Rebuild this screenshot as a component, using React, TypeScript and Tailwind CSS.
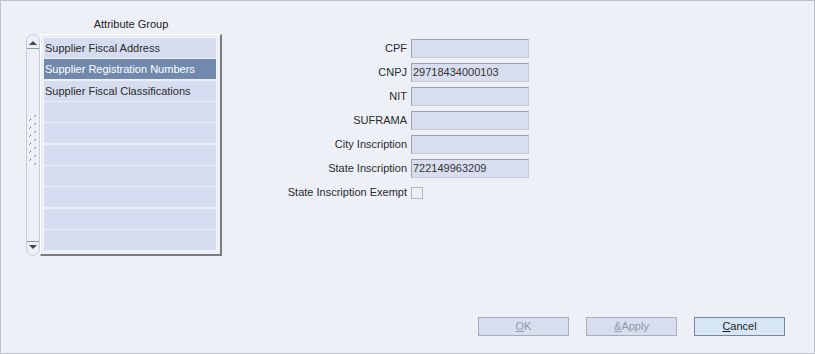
import React from 'react';

const groups = [
    'Supplier Fiscal Address',
    'Supplier Registration Numbers',
    'Supplier Fiscal Classifications',
    '', '', '', '', '', '', '',
];

const fields: { label: string; value: string }[] = [
    { label: 'CPF', value: '' },
    { label: 'CNPJ', value: '29718434000103' },
    { label: 'NIT', value: '' },
    { label: 'SUFRAMA', value: '' },
    { label: 'City Inscription', value: '' },
    { label: 'State Inscription', value: '722149963209' },
];

function ScrollBar() {
    const left = [0, 1, 2, 3, 4, 5].map(i => 6 + i * 8);
    const right = [0, 1, 2, 3, 4, 5, 6].map(i => 2 + i * 8);
    return (
        <div className="w-[14px] h-[222px] rounded-full border border-[#c3cce0] bg-[#eef0f8] flex flex-col items-center overflow-hidden">
            <div className="h-[14px] w-full flex items-center justify-center border-b border-[#8b99b0]">
                <svg width="8" height="5" viewBox="0 0 8 5" className="mt-[1px]">
                    <path d="M0 5 L4 1 L8 5 Z" fill="#3f4757" />
                </svg>
            </div>
            <div className="flex-1 w-full flex items-center justify-center mb-[10px]">
                <svg width="10" height="54" viewBox="0 0 10 54">
                    {left.map(y => (
                        <g key={'l' + y}>
                            <rect x="1" y={y + 1} width="1" height="1" fill="#8c9bb8" />
                            <rect x="2" y={y} width="1" height="1" fill="#4f5f80" />
                        </g>
                    ))}
                    {right.map(y => (
                        <g key={'r' + y}>
                            <rect x="6" y={y + 1} width="1" height="1" fill="#8c9bb8" />
                            <rect x="7" y={y} width="1" height="1" fill="#4f5f80" />
                        </g>
                    ))}
                </svg>
            </div>
            <div className="h-[14px] w-full flex items-center justify-center border-t border-[#8b99b0]">
                <svg width="8" height="5" viewBox="0 0 8 5" className="mb-[2px]">
                    <path d="M0 0 L8 0 L4 4 Z" fill="#3f4757" />
                </svg>
            </div>
        </div>
    );
}

function Button({ children, disabled }: { children: React.ReactNode; disabled?: boolean }) {
    return (
        <button
            className={
                disabled
                    ? 'w-[91px] h-[19px] border border-[#a9aeb9] bg-[#d8def0] text-[#9199ab] leading-[17px]'
                    : 'w-[91px] h-[19px] border border-[#76869e] bg-[#d6e6f7] text-[#1e1e1e] leading-[17px]'
            }
        >
            {children}
        </button>
    );
}

export default function App() {
    return (
        <div
            className="w-[815px] h-[354px] border border-[#bfc1c8] bg-[#eef0f8] flex flex-col text-[11px] text-[#2a2a2a]"
            style={{ fontFamily: '"Liberation Sans", Arial, sans-serif' }}
        >
            <div className="flex-1 flex pt-[14px] pl-[25px]">
                <div className="flex flex-col">
                    <div className="h-[19px] leading-[19px] pl-[14px] text-center text-[#222]">Attribute Group</div>
                    <div className="flex">
                        <ScrollBar />
                        <div className="w-[182px] h-[222px] border-t border-l border-white border-r-2 border-b-2 border-r-[#7c7c80] border-b-[#7c7c80] pt-[3px] pl-[3px] pr-[4px] flex flex-col gap-[1.33px]">
                            {groups.map((g, i) => (
                                <div
                                    key={i}
                                    className={
                                        i === 1
                                            ? 'h-[20px] shrink-0 bg-[#7189ad] text-white leading-[20px] pl-[1px] whitespace-nowrap'
                                            : 'h-[20px] shrink-0 bg-[#d7ddf0] leading-[20px] pl-[1px] whitespace-nowrap'
                                    }
                                >
                                    {g}
                                </div>
                            ))}
                        </div>
                    </div>
                </div>

                <div className="ml-[39px] mt-[24px] flex flex-col gap-[5px]">
                    {fields.map(f => (
                        <div key={f.label} className="flex items-center h-[19px]">
                            <div className="w-[150px] text-right pr-[4px] whitespace-nowrap">{f.label}</div>
                            <div className="w-[118px] h-[19px] border border-[#9fa3ac] border-b-[#c6cad4] border-r-[#c6cad4] bg-[#d8def0] pl-[1px] leading-[17px] text-[#333]">
                                {f.value}
                            </div>
                        </div>
                    ))}
                    <div className="flex items-center h-[19px]">
                        <div className="w-[150px] text-right pr-[4px] whitespace-nowrap">State Inscription Exempt</div>
                        <div className="w-[12px] h-[12px] border border-[#b2b6bf] bg-[#eef0f8]" />
                    </div>
                </div>
            </div>

            <div className="flex justify-end gap-[17px] pr-[29px] pb-[17px]">
                <Button disabled>
                    <span className="underline">O</span>K
                </Button>
                <Button disabled>
                    <span className="underline">&amp;</span>Apply
                </Button>
                <Button>
                    <span className="underline">C</span>ancel
                </Button>
            </div>
        </div>
    );
}
